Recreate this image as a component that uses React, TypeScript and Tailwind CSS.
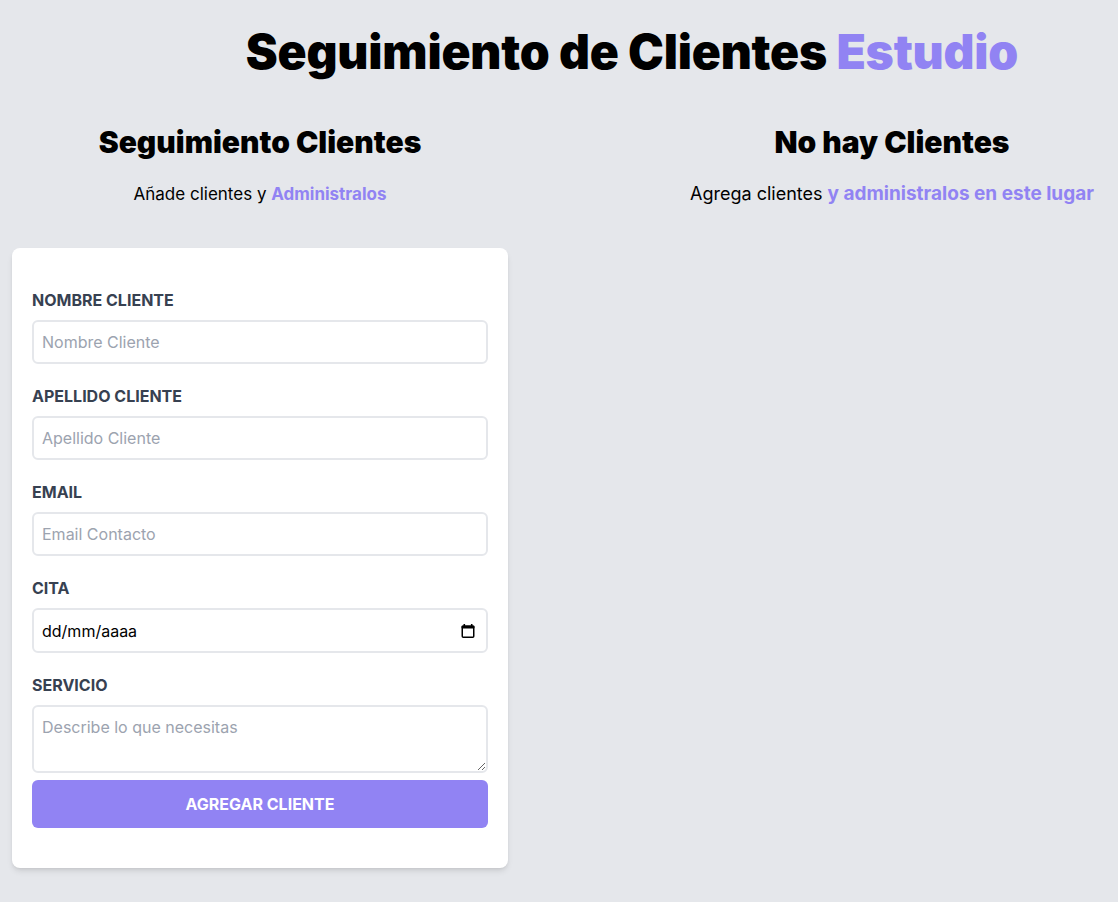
import { useState } from "react"

const font = { fontFamily: "Inter, 'Noto Sans', sans-serif" }

function CalendarIcon() {
  return (
    <svg width="14" height="15" viewBox="0 0 14 15" className="pointer-events-none absolute right-[13px] top-1/2 -translate-y-1/2">
      <rect x="2.5" y="0.5" width="1.6" height="3" fill="#000" />
      <rect x="9.9" y="0.5" width="1.6" height="3" fill="#000" />
      <rect x="0.5" y="2" width="13" height="3" rx="1" fill="#000" />
      <rect x="1.25" y="2.75" width="11.5" height="11" rx="1" fill="none" stroke="#000" strokeWidth="1.5" />
    </svg>
  )
}

function Field({ id, label, children }: { id: string; label: string; children: React.ReactNode }) {
  return (
    <div className="mb-5">
      <label htmlFor={id} className="block font-bold uppercase text-[#374151]">
        {label}
      </label>
      {children}
    </div>
  )
}

const inputCls =
  "mt-2 block w-full rounded-md border-2 border-[#e5e7eb] bg-white p-2 text-black placeholder:text-[#9ca3af] outline-none"

export default function App() {
  const [nombre, setNombre] = useState("")
  const [apellido, setApellido] = useState("")
  const [email, setEmail] = useState("")
  const [servicio, setServicio] = useState("")

  return (
    <div className="min-h-screen bg-[#e5e7eb] pt-7" style={font}>
      <h1 className="pl-[146px] text-center text-5xl font-black tracking-[-0.2px] text-black">
        Seguimiento de Clientes <span className="text-[#9183f3]">Estudio</span>
      </h1>

      <div className="mt-12 flex">
        <div className="mx-3 w-[496px] shrink-0">
          <h2 className="text-center text-3xl font-black">Seguimiento Clientes</h2>
          <p className="mt-5 mb-10 text-center text-[17px] leading-7">
            Añade clientes y <span className="font-bold text-[#9183f3]">Administralos</span>
          </p>

          <form
            className="rounded-lg bg-white px-5 py-10 shadow-md"
            onSubmit={(e) => e.preventDefault()}
          >
            <Field id="nombre" label="Nombre Cliente">
              <input
                id="nombre"
                type="text"
                placeholder="Nombre Cliente"
                className={inputCls}
                value={nombre}
                onChange={(e) => setNombre(e.target.value)}
              />
            </Field>
            <Field id="apellido" label="Apellido Cliente">
              <input
                id="apellido"
                type="text"
                placeholder="Apellido Cliente"
                className={inputCls}
                value={apellido}
                onChange={(e) => setApellido(e.target.value)}
              />
            </Field>
            <Field id="email" label="Email">
              <input
                id="email"
                type="email"
                placeholder="Email Contacto"
                className={inputCls}
                value={email}
                onChange={(e) => setEmail(e.target.value)}
              />
            </Field>
            <Field id="cita" label="Cita">
              <div className="relative mt-2">
                <input
                  id="cita"
                  type="text"
                  readOnly
                  value="dd/mm/aaaa"
                  className="block h-[45px] w-full rounded-md border-2 border-[#e5e7eb] bg-white px-2 text-black outline-none"
                />
                <CalendarIcon />
              </div>
            </Field>
            <div>
              <label htmlFor="servicio" className="block font-bold uppercase text-[#374151]">
                Servicio
              </label>
              <textarea
                id="servicio"
                rows={2}
                placeholder="Describe lo que necesitas"
                className={inputCls}
                value={servicio}
                onChange={(e) => setServicio(e.target.value)}
              />
            </div>
            <button
              type="submit"
              className="mt-[7px] block w-full rounded-md bg-[#9183f3] p-3 font-bold uppercase text-white"
            >
              Agregar Cliente
            </button>
          </form>
        </div>

        <div className="ml-[146px] flex-1">
          <h2 className="text-center text-3xl font-black">No hay Clientes</h2>
          <p className="mt-5 text-center text-lg leading-7 whitespace-nowrap">
            Agrega clientes{" "}
            <span className="text-[19px] font-bold text-[#9183f3]">y administralos en este lugar</span>
          </p>
        </div>
      </div>
    </div>
  )
}
